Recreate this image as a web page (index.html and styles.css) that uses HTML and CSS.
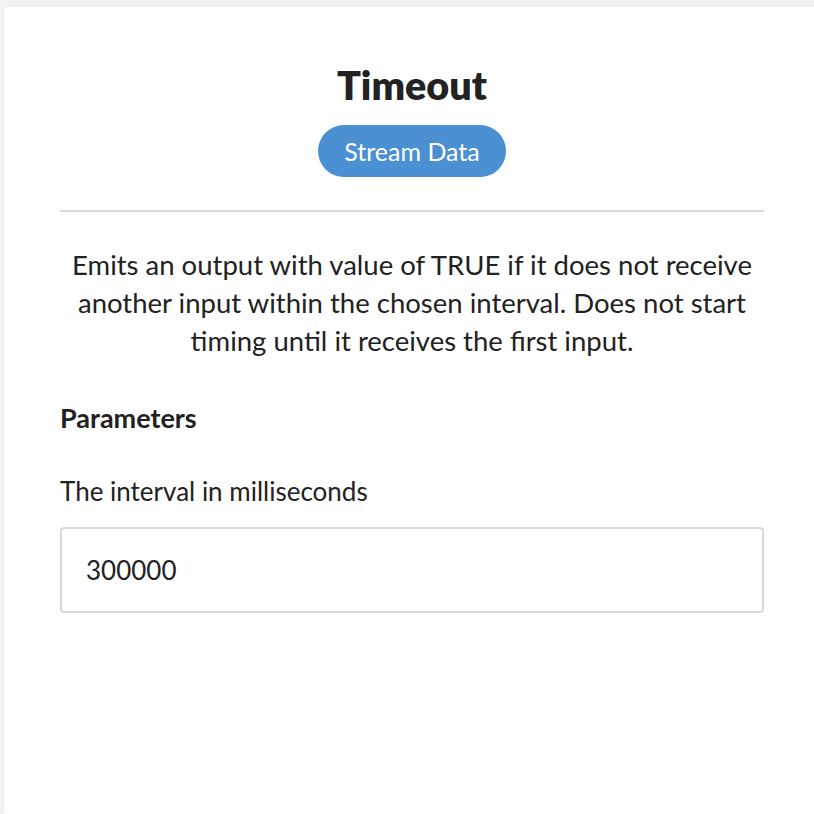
FILE: index.html
```html
<!DOCTYPE html>
<html lang="en">
<head>
    <meta charset="UTF-8">
    <meta name="viewport" content="width=device-width, initial-scale=1.0">
    <title>Timeout</title>
    <link rel="stylesheet" href="styles.css">
</head>
<body>

    <div class="panel">
        <div class="header">
            <h1>Timeout</h1>
            <span class="badge">Stream Data</span>
        </div>

        <p class="description">Emits an output with value of TRUE if it does not receive another input within the chosen interval. Does not start timing until it receives the first input.</p>

        <h2>Parameters</h2>

        <label for="interval">The interval in milliseconds</label>
        <input type="text" id="interval" name="interval" value="300000">
    </div>

</body>
</html>
```

FILE: styles.css
```css
body {
    font-family: 'Lato', 'Noto Sans', sans-serif;
    background-color: #f2f2f2;
    margin: 0;
    color: #222;
    overflow: hidden;
}

.panel {
    background-color: #fff;
    margin: 7px -10px 0 4px;
    height: calc(100vh - 7px);
    box-sizing: border-box;
    padding: 52px 60px 0 56px;
    border-radius: 4px 0 0 0;
    box-shadow: 0 0 2px rgba(0, 0, 0, 0.06);
}

.header {
    text-align: center;
    padding-bottom: 33px;
    border-bottom: 2px solid #d9d9d9;
}

h1 {
    font-size: 39.5px;
    font-weight: 800;
    margin: 0 0 14px;
    line-height: 52px;
}

.badge {
    display: inline-block;
    background-color: #4a90d2;
    color: #fff;
    font-size: 25px;
    line-height: 52px;
    padding: 0 26px;
    border-radius: 26px;
}

.description {
    text-align: center;
    font-size: 27.5px;
    line-height: 38px;
    margin: 34px 0 0;
}

h2 {
    font-size: 27px;
    font-weight: 700;
    margin: 41px 0 0;
    line-height: 34px;
}

label {
    display: block;
    font-size: 26px;
    margin: 40px 0 0;
    line-height: 32px;
}

input {
    display: block;
    width: 100%;
    box-sizing: border-box;
    margin-top: 20px;
    height: 86px;
    padding: 0 24px;
    font-family: inherit;
    font-size: 26px;
    color: #222;
    border: 2px solid #d9d9d9;
    border-radius: 4px;
}
```
